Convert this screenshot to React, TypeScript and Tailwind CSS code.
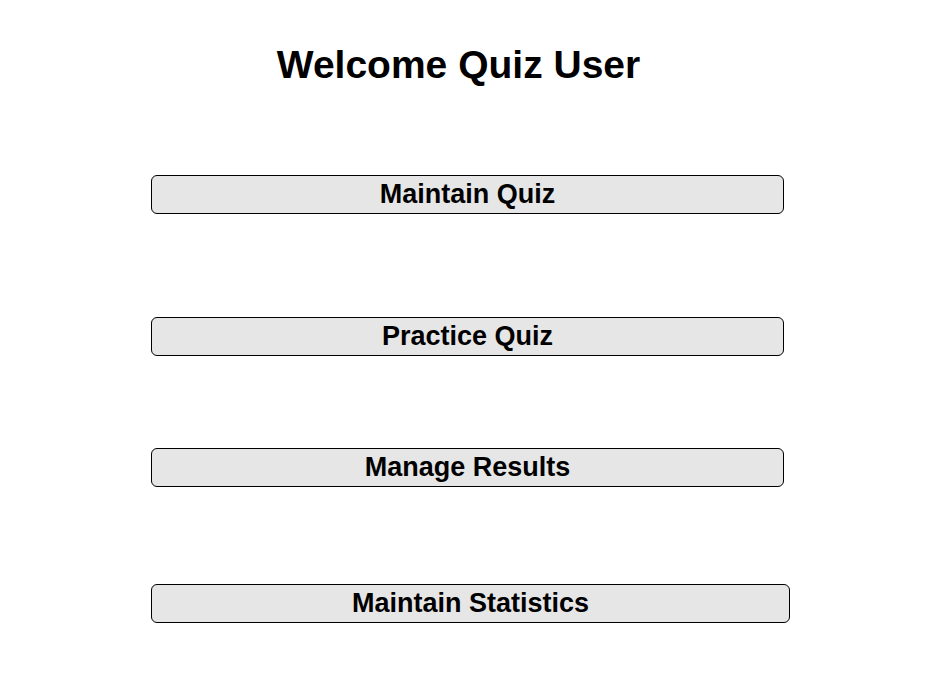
const menuItems = [
    { label: "Maintain Quiz", width: "w-[633px]", margin: "mt-[88px]" },
    { label: "Practice Quiz", width: "w-[633px]", margin: "mt-[103px]" },
    { label: "Manage Results", width: "w-[633px]", margin: "mt-[92px]" },
    { label: "Maintain Statistics", width: "w-[639px]", margin: "mt-[97px]" },
];

export default function App() {
    return (
        <div className="min-h-[697px] w-full bg-white font-['Liberation_Sans',Arial,sans-serif] text-black">
            <div className="flex justify-center pr-[12px] pt-[42px]">
                <h1 className="text-[39px] font-bold leading-[45px]">Welcome Quiz User</h1>
            </div>

            <div className="flex flex-col pl-[151px]">
                {menuItems.map((item) => (
                    <button
                        key={item.label}
                        className={`${item.width} ${item.margin} flex h-[39px] items-center justify-center rounded-[6px] border border-black bg-[#e6e6e6] text-[27px] font-bold leading-[37px]`}
                    >
                        {item.label}
                    </button>
                ))}
            </div>
        </div>
    );
}
